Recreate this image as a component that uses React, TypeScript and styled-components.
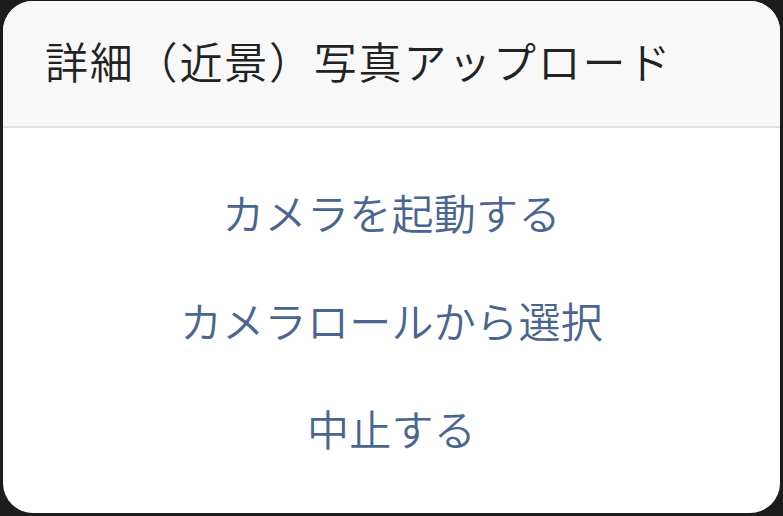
import React, { FC } from 'react';
import styled, { createGlobalStyle } from 'styled-components';

const GlobalStyle = createGlobalStyle`
  html, body {
    margin: 0;
    padding: 0;
    background-color: #1c1c1c;
  }
  body {
    font-family: "Noto Sans CJK JP", "Noto Sans", sans-serif;
  }
`;

const Screen = styled.div`
  width: 783px;
  height: 516px;
  box-sizing: border-box;
  padding: 1px 3px 3px 3px;
`;

const Sheet = styled.div`
  display: flex;
  flex-direction: column;
  height: 100%;
  border-radius: 30px;
  overflow: hidden;
  background-color: #ffffff;
`;

const Header = styled.div`
  display: flex;
  align-items: center;
  height: 125px;
  padding: 0 42px;
  background-color: #f8f8f8;
  border-bottom: 2px solid #e2e2e2;
`;

const Title = styled.h1`
  margin: 0 0 8px 0;
  font-size: 43px;
  font-weight: 350;
  color: #222222;
  letter-spacing: 1.8px;
  white-space: nowrap;
`;

const Options = styled.div`
  display: flex;
  flex-direction: column;
  padding-top: 29px;
`;

const Option = styled.button`
  height: 108px;
  border: none;
  background: none;
  padding: 0;
  font-family: inherit;
  font-size: 42px;
  font-weight: 350;
  color: #4b6591;
  letter-spacing: 0.3px;
  cursor: pointer;
`;

type Choice = {
  id: string;
  label: string;
};

const choices: Choice[] = [
  { id: 'camera', label: 'カメラを起動する' },
  { id: 'roll', label: 'カメラロールから選択' },
  { id: 'cancel', label: '中止する' },
];

const App: FC = () => {
  return (
    <>
      <GlobalStyle />
      <Screen>
        <Sheet>
          <Header>
            <Title>詳細（近景）写真アップロード</Title>
          </Header>
          <Options>
            {choices.map((choice) => (
              <Option key={choice.id}>{choice.label}</Option>
            ))}
          </Options>
        </Sheet>
      </Screen>
    </>
  );
};

export default App;
